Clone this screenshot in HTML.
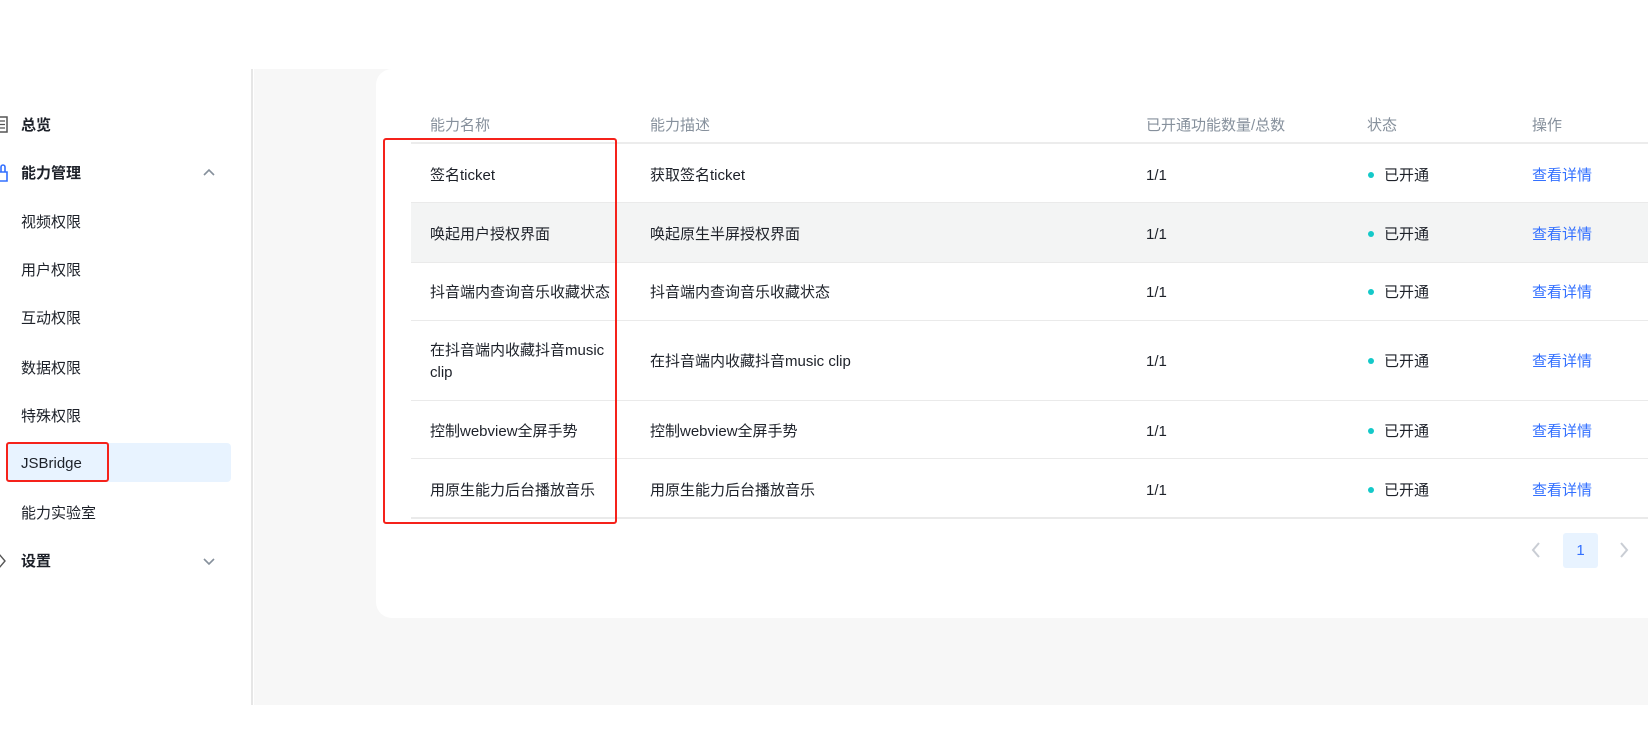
<!DOCTYPE html>
<html><head><meta charset="utf-8"><style>
*{margin:0;padding:0;box-sizing:border-box}
body{width:1648px;height:755px;background:#fff;position:relative;overflow:hidden;font-family:"Liberation Sans","Noto Sans CJK SC",sans-serif;font-size:15px;color:#1d2129}
.a{position:absolute;white-space:nowrap;line-height:22px}
div.a{margin-top:3px}
.gray{position:absolute;left:254px;top:69px;width:1394px;height:636px;background:#f7f7f7}
.vline{position:absolute;left:251px;top:69px;width:2px;height:636px;background:#e6e6e6}
.card{position:absolute;left:376px;top:69px;width:1272px;height:549px;background:#fff;border-radius:16px 0 0 16px}
.hl{position:absolute;left:6px;top:443px;width:225px;height:39px;background:#e8f3ff;border-radius:4px}
.red{position:absolute;border:2px solid #f5221b;border-radius:3px}
.side{font-size:15px;color:#1d2129}
.bold{font-weight:bold}
.th{color:#86909c;font-size:15px}
.line{position:absolute;left:411px;width:1237px;height:1px;background:#eaeaea}
.dot{position:absolute;width:6px;height:6px;border-radius:50%;background:#14c9c9;margin-top:2px}
.lk{color:#3370ff}
</style></head><body>
<div class="gray"></div><div class="vline"></div>
<div class="card"></div>
<div class="hl"></div>

<!-- sidebar -->
<svg class="a" style="left:-4px;top:116px" width="12" height="17" viewBox="0 0 12 17"><rect x="1" y="1" width="10" height="15" fill="none" stroke="#555" stroke-width="1.5"/><path d="M4 5h5M4 8.5h5M4 12h5" stroke="#555" stroke-width="1.3"/></svg>
<div class="a side bold" style="left:21px;top:112px">总览</div>
<svg class="a" style="left:-3px;top:164px" width="12" height="18" viewBox="0 0 12 18"><path d="M1 8h9v9H1z M4 8V3a2 2 0 0 1 4 0v5" fill="none" stroke="#3370ff" stroke-width="1.6"/></svg>
<div class="a side bold" style="left:21px;top:160px">能力管理</div>
<svg class="a" style="left:202px;top:168px" width="14" height="9" viewBox="0 0 14 9"><path d="M2 7l5-5 5 5" fill="none" stroke="#86909c" stroke-width="1.6"/></svg>
<div class="a side" style="left:21px;top:209px">视频权限</div>
<div class="a side" style="left:21px;top:257px">用户权限</div>
<div class="a side" style="left:21px;top:305px">互动权限</div>
<div class="a side" style="left:21px;top:355px">数据权限</div>
<div class="a side" style="left:21px;top:403px">特殊权限</div>
<div class="a side" style="left:21px;top:450px">JSBridge</div>
<div class="a side" style="left:21px;top:500px">能力实验室</div>
<svg class="a" style="left:-2px;top:552px" width="9" height="18" viewBox="0 0 9 18"><path d="M1 2l6 7-6 7" fill="none" stroke="#555" stroke-width="1.4"/></svg>
<div class="a side bold" style="left:21px;top:548px">设置</div>
<svg class="a" style="left:202px;top:557px" width="14" height="9" viewBox="0 0 14 9"><path d="M2 2l5 5 5-5" fill="none" stroke="#86909c" stroke-width="1.6"/></svg>
<div class="red" style="left:6px;top:442px;width:103px;height:40px"></div>

<!-- table header -->
<div class="a th" style="left:430px;top:112px">能力名称</div>
<div class="a th" style="left:650px;top:112px">能力描述</div>
<div class="a th" style="left:1146px;top:112px">已开通功能数量/总数</div>
<div class="a th" style="left:1367px;top:112px">状态</div>
<div class="a th" style="left:1532px;top:112px">操作</div>
<div class="line" style="top:142px;height:2px;background:#ececec"></div>

<div class="a" style="left:411px;top:203px;width:1237px;height:59px;background:#f3f4f4;margin-top:0"></div>
<div class="line" style="top:202px"></div>
<div class="line" style="top:262px"></div>
<div class="line" style="top:320px"></div>
<div class="line" style="top:400px"></div>
<div class="line" style="top:458px"></div>
<div class="line" style="top:517px;height:2px"></div>

<!-- rows -->
<div class="a" style="left:430px;top:162px">签名ticket</div>
<div class="a" style="left:650px;top:162px">获取签名ticket</div>
<div class="a" style="left:430px;top:221px">唤起用户授权界面</div>
<div class="a" style="left:650px;top:221px">唤起原生半屏授权界面</div>
<div class="a" style="left:430px;top:279px">抖音端内查询音乐收藏状态</div>
<div class="a" style="left:650px;top:279px">抖音端内查询音乐收藏状态</div>
<div class="a" style="left:430px;top:337px">在抖音端内收藏抖音music<br>clip</div>
<div class="a" style="left:650px;top:348px">在抖音端内收藏抖音music clip</div>
<div class="a" style="left:430px;top:418px">控制webview全屏手势</div>
<div class="a" style="left:650px;top:418px">控制webview全屏手势</div>
<div class="a" style="left:430px;top:477px">用原生能力后台播放音乐</div>
<div class="a" style="left:650px;top:477px">用原生能力后台播放音乐</div>

<div class="a" style="left:1146px;top:162px">1/1</div>
<div class="a" style="left:1146px;top:221px">1/1</div>
<div class="a" style="left:1146px;top:279px">1/1</div>
<div class="a" style="left:1146px;top:348px">1/1</div>
<div class="a" style="left:1146px;top:418px">1/1</div>
<div class="a" style="left:1146px;top:477px">1/1</div>

<div class="dot" style="left:1368px;top:170px"></div><div class="a" style="left:1384px;top:162px">已开通</div>
<div class="dot" style="left:1368px;top:229px"></div><div class="a" style="left:1384px;top:221px">已开通</div>
<div class="dot" style="left:1368px;top:287px"></div><div class="a" style="left:1384px;top:279px">已开通</div>
<div class="dot" style="left:1368px;top:356px"></div><div class="a" style="left:1384px;top:348px">已开通</div>
<div class="dot" style="left:1368px;top:426px"></div><div class="a" style="left:1384px;top:418px">已开通</div>
<div class="dot" style="left:1368px;top:485px"></div><div class="a" style="left:1384px;top:477px">已开通</div>

<div class="a lk" style="left:1532px;top:162px">查看详情</div>
<div class="a lk" style="left:1532px;top:221px">查看详情</div>
<div class="a lk" style="left:1532px;top:279px">查看详情</div>
<div class="a lk" style="left:1532px;top:348px">查看详情</div>
<div class="a lk" style="left:1532px;top:418px">查看详情</div>
<div class="a lk" style="left:1532px;top:477px">查看详情</div>

<div class="red" style="left:383px;top:138px;width:234px;height:386px"></div>

<!-- pagination -->
<svg class="a" style="left:1530px;top:541px" width="12" height="18" viewBox="0 0 12 18"><path d="M9 2L3 9l6 7" fill="none" stroke="#c9cdd4" stroke-width="2"/></svg>
<div class="a" style="left:1563px;top:533px;width:35px;height:35px;background:#e8f3ff;border-radius:3px;color:#3370ff;text-align:center;line-height:35px;font-size:15px;margin-top:0">1</div>
<svg class="a" style="left:1618px;top:541px" width="12" height="18" viewBox="0 0 12 18"><path d="M3 2l6 7-6 7" fill="none" stroke="#c9cdd4" stroke-width="2"/></svg>
</body></html>
